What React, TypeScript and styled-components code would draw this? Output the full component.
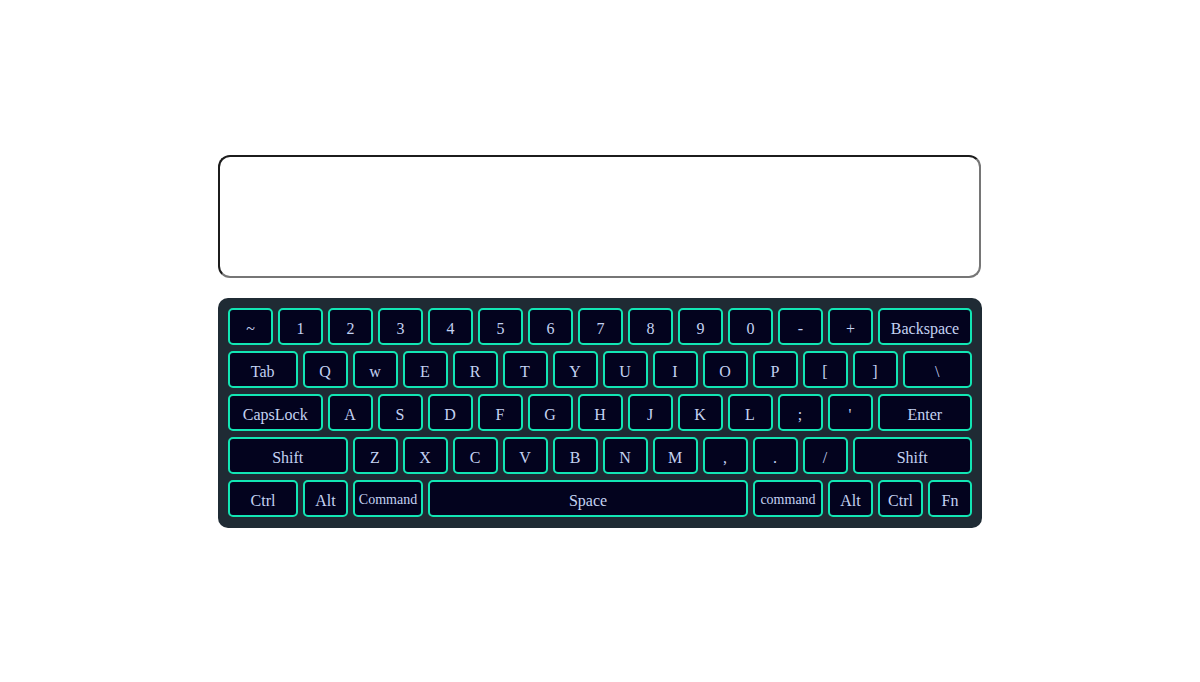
import React from "react";
import styled, { createGlobalStyle } from "styled-components";

const GlobalStyle = createGlobalStyle`
  html, body { margin: 0; padding: 0; background: #ffffff; }
  body { font-family: "Liberation Serif", "Times New Roman", serif; }
`;

const Page = styled.div`
  width: 1200px;
  height: 682px;
  display: flex;
  flex-direction: column;
  align-items: center;
  justify-content: center;
  gap: 20px;
`;

const TextArea = styled.textarea`
  box-sizing: border-box;
  width: 763px;
  height: 123px;
  margin: 0 1px 0 0;
  padding: 8px;
  resize: none;
  outline: none;
  border-width: 2px;
  border-style: solid;
  border-color: #1c1c1c #767676 #767676 #1c1c1c;
  border-radius: 12px;
  background: #ffffff;
  font-family: "Liberation Serif", serif;
  font-size: 16px;
`;

const Keyboard = styled.div`
  box-sizing: border-box;
  width: 764px;
  padding: 10px 10px 11px;
  background: #1f2b34;
  border-radius: 10px;
  display: flex;
  flex-direction: column;
  gap: 6px;
`;

const Row = styled.div`
  display: flex;
  gap: 5px;
`;

const Key = styled.div<{ $w?: number; $grow?: boolean; $small?: boolean }>`
  box-sizing: border-box;
  height: 37px;
  width: ${(p) => (p.$grow ? "auto" : `${p.$w ?? 45}px`)};
  flex: ${(p) => (p.$grow ? "1 1 0" : "0 0 auto")};
  border: 2px solid #12e6b4;
  border-radius: 5px;
  background: #03031e;
  color: #c3d2f2;
  display: flex;
  align-items: center;
  justify-content: center;
  padding-top: ${(p) => (p.$small ? "3px" : "5px")};
  font-family: "Liberation Serif", "Times New Roman", serif;
  font-size: ${(p) => (p.$small ? "14px" : "16px")};
  white-space: nowrap;
`;

type K = { l: string; w?: number; grow?: boolean; small?: boolean };

const rows: K[][] = [
  [
    ...["~", "1", "2", "3", "4", "5", "6", "7", "8", "9", "0", "-", "+"].map((l) => ({ l })),
    { l: "Backspace", grow: true },
  ],
  [
    { l: "Tab", grow: true },
    ...["Q", "w", "E", "R", "T", "Y", "U", "I", "O", "P", "[", "]"].map((l) => ({ l })),
    { l: "\\", grow: true },
  ],
  [
    { l: "CapsLock", grow: true },
    ...["A", "S", "D", "F", "G", "H", "J", "K", "L", ";", "'"].map((l) => ({ l })),
    { l: "Enter", grow: true },
  ],
  [
    { l: "Shift", grow: true },
    ...["Z", "X", "C", "V", "B", "N", "M", ",", ".", "/"].map((l) => ({ l })),
    { l: "Shift", grow: true },
  ],
  [
    { l: "Ctrl", w: 70 },
    { l: "Alt" },
    { l: "Command", w: 70, small: true },
    { l: "Space", w: 320 },
    { l: "command", w: 70, small: true },
    { l: "Alt" },
    { l: "Ctrl" },
    { l: "Fn", grow: true },
  ],
];

export default function App() {
  return (
    <>
      <GlobalStyle />
      <Page>
        <TextArea />
        <Keyboard>
          {rows.map((row, i) => (
            <Row key={i}>
              {row.map((k, j) => (
                <Key key={j} $w={k.w} $grow={k.grow} $small={k.small}>
                  {k.l}
                </Key>
              ))}
            </Row>
          ))}
        </Keyboard>
      </Page>
    </>
  );
}
